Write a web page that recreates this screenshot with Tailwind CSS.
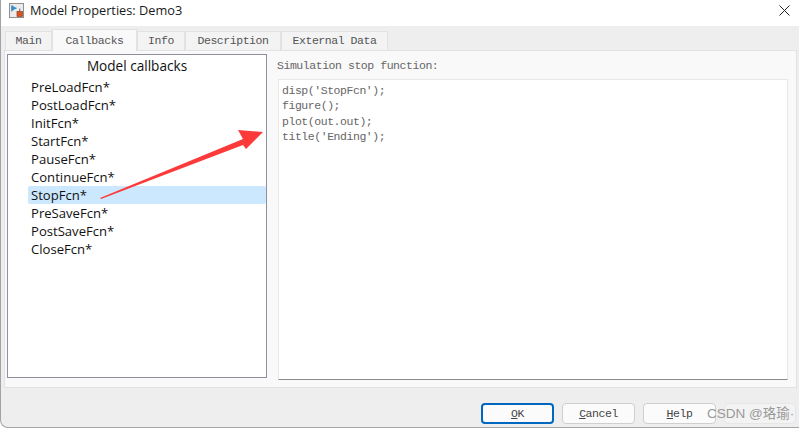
<!DOCTYPE html>
<html lang="en">
<head>
  <meta charset="UTF-8" />
  <title>Model Properties: Demo3</title>
  <script src="https://cdn.jsdelivr.net/npm/@tailwindcss/browser@4"></script>
</head>
<body class="bg-white overflow-hidden">
  <div class="relative w-[799px] h-[428px] flex flex-col bg-[#eeeeee] border-l border-b border-[#a3a3a3] rounded-bl-lg overflow-hidden">
    <!-- Title bar -->
    <div class="h-[26px] -ml-px bg-white flex items-center pl-[9px] pr-[8px] pb-[5px] shrink-0">
      <svg width="15" height="15" viewBox="0 0 16 16" class="shrink-0">
        <rect x="0.5" y="0.5" width="15" height="15" fill="#ececec" stroke="#8a8a8a"/>
        <path d="M3 2.5V9M3 5.5H8" stroke="#3a6ea5" fill="none"/>
        <path d="M3 2.5L8 5.5L3 8.5Z" fill="#2f8fd0"/>
        <path d="M11.5 6V9" stroke="#555" fill="none"/>
        <rect x="8.5" y="9" width="6" height="5.5" fill="#d9531e" stroke="#7a3312" stroke-width="0.6"/>
      </svg>
      <span class="ml-[6px] text-[12.75px] text-[#1a1a1a] font-['Open_Sans',sans-serif]">Model Properties: Demo3</span>
      <svg width="11" height="11" viewBox="0 0 11 11" class="ml-auto mr-[1px]"><path d="M0.5 0.5L10.5 10.5M10.5 0.5L0.5 10.5" stroke="#222" fill="none"/></svg>
    </div>

    <!-- Tabs -->
    <div class="h-[24px] flex items-end pl-[4px] shrink-0 font-['Liberation_Mono',monospace] text-[11.5px] tracking-[-0.45px] text-[#555]">
      <div class="w-[47px] h-[19px] flex items-center justify-center bg-[#f3f3f3] border border-b-0 border-[#e2e2e2]">Main</div>
      <div class="w-[85px] h-[22px] flex items-center justify-center bg-[#f9f9f9] border border-b-0 border-[#e2e2e2] -mb-px z-10">Callbacks</div>
      <div class="w-[48px] h-[19px] flex items-center justify-center bg-[#f3f3f3] border border-b-0 border-[#e2e2e2]">Info</div>
      <div class="w-[96px] h-[19px] flex items-center justify-center bg-[#f3f3f3] border border-b-0 border-[#e2e2e2]">Description</div>
      <div class="w-[107px] h-[19px] flex items-center justify-center bg-[#f3f3f3] border border-b-0 border-[#e2e2e2]">External Data</div>
    </div>

    <!-- Tab panel -->
    <div class="ml-[3px] mr-[2px] h-[338px] bg-[#f9f9f9] border border-[#e2e2e2] pl-[2px] pt-[3px] flex shrink-0">
      <div class="w-[260px] h-[324px] bg-white border border-[#8f8f9d] pl-[20px] flex flex-col font-['Open_Sans',sans-serif] text-[13.1px] text-[#111] shrink-0">
        <div class="-ml-[20px] h-[23px] flex items-center justify-center text-[13.6px]">Model callbacks</div>
        <div class="h-[18px] pl-[3px] pt-px flex items-center">PreLoadFcn*</div>
        <div class="h-[18px] pl-[3px] pt-px flex items-center">PostLoadFcn*</div>
        <div class="h-[18px] pl-[3px] pt-px flex items-center">InitFcn*</div>
        <div class="h-[18px] pl-[3px] pt-px flex items-center">StartFcn*</div>
        <div class="h-[18px] pl-[3px] pt-px flex items-center">PauseFcn*</div>
        <div class="h-[18px] pl-[3px] pt-px flex items-center">ContinueFcn*</div>
        <div class="h-[18px] pl-[3px] pt-px flex items-center bg-[#cce8ff] rounded-[2px]">StopFcn*</div>
        <div class="h-[18px] pl-[3px] pt-px flex items-center">PreSaveFcn*</div>
        <div class="h-[18px] pl-[3px] pt-px flex items-center">PostSaveFcn*</div>
        <div class="h-[18px] pl-[3px] pt-px flex items-center">CloseFcn*</div>
      </div>
      <div class="ml-[11px] flex flex-col font-['Liberation_Mono',monospace] text-[11.5px] tracking-[-0.45px] text-[#666]">
        <div class="h-[26px] flex items-center -mt-[1px] -ml-[1px]">Simulation stop function:</div>
        <div class="w-[510px] h-[301px] bg-white border border-[#e8e8e8] border-b-[#8a8a8a] pl-[3px] pt-[3px] leading-[15.3px]">
          <div>disp('StopFcn');</div>
          <div>figure();</div>
          <div>plot(out.out);</div>
          <div>title('Ending');</div>
        </div>
      </div>
    </div>

    <!-- Buttons -->
    <div class="flex pl-[480px] pt-[15px] gap-[8px] font-['Liberation_Mono',monospace] text-[11.5px] tracking-[-0.45px] text-[#444]">
      <div class="w-[73px] h-[21px] flex items-center justify-center bg-[#fbfbfb] border-2 border-[#0067c0] rounded-[4px]"><span class="underline">O</span>K</div>
      <div class="w-[73px] h-[21px] flex items-center justify-center bg-[#fbfbfb] border border-[#cfcfcf] rounded-[4px]"><span class="underline">C</span>ancel</div>
      <div class="w-[73px] h-[21px] flex items-center justify-center bg-[#fbfbfb] border border-[#cfcfcf] rounded-[4px]"><span class="underline">H</span>elp</div>
      <div class="w-[72px] h-[21px] bg-[#f3f3f3] border border-[#e6e6e6] rounded-[4px]"></div>
    </div>

    <!-- Annotation arrow -->
    <svg class="absolute left-[-1px] top-0" width="799" height="428" viewBox="0 0 799 428">
      <path d="M100 198L243 139L238 130L263 132L246 149L243 145L101 199Z" fill="#fd3a3a"/>
    </svg>

    <!-- Watermark -->
    <div class="absolute left-[706px] top-[404px] text-[13.5px] text-[#999] font-['Liberation_Sans','Noto_Sans_CJK_SC',sans-serif]">CSDN @珞瑜·</div>
  </div>
</body>
</html>
